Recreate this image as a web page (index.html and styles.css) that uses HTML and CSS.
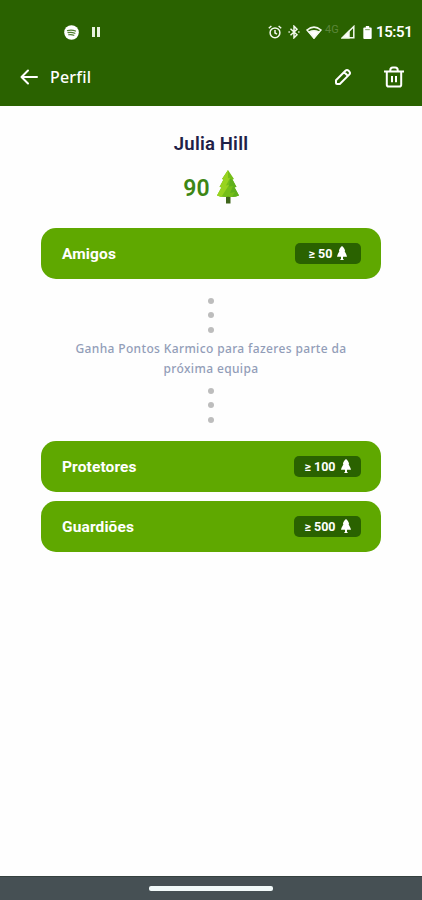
FILE: index.html
```
<!DOCTYPE html>
<html lang="pt">
<head>
    <meta charset="UTF-8">
    <meta name="viewport" content="width=device-width, initial-scale=1.0">
    <title>Perfil</title>
    <link rel="stylesheet" href="styles.css">
</head>
<body>
    <svg class="symbols" aria-hidden="true">
        <symbol id="tree" viewBox="0 0 10 14">
            <path d="M5 0C3.400 1 2.200 3 1.900 5.200h.6C1.500 6.700.6 8.200 0 10.800H4V13H3.400v1h3.200v-1H6v-2.200h4C9.400 8.200 8.500 6.700 7.500 5.200h.6C7.800 3 6.600 1 5 0z"/>
        </symbol>
    </svg>

    <header>
        <div class="status-bar">
            <div class="status-left">
                <svg class="spotify" viewBox="0 0 16 16">
                    <circle cx="8" cy="8" r="7.800" fill="#fff"/>
                    <path d="M3.700 6Q8 4.700 12.300 6.400M4.300 8.200Q8 7.200 11.600 8.800M5 10.400Q8 9.700 10.500 11" fill="none" stroke="#4f7c30" stroke-width="1.300" stroke-linecap="round"/>
                </svg>
                <svg class="pause" viewBox="0 0 8 10">
                    <path d="M0 0h3v10H0zM5 0h3v10H5z" fill="#e8f3df"/>
                </svg>
            </div>
            <div class="status-right">
                <svg class="alarm" viewBox="0 0 14 14">
                    <circle cx="7" cy="7.800" r="4.900"/>
                    <path d="M7 5v3l2 1.200M.8 3.200l2.600-2.200M13.200 3.200l-2.600-2.200"/>
                </svg>
                <svg class="bluetooth" viewBox="0 0 12 14">
                    <path d="M2.500 3.800l6.500 6L6 12.800V1.200l3 3-6.500 6"/>
                    <path d="M.5 7h1.300M10.200 7h1.300"/>
                </svg>
                <svg class="wifi" viewBox="0 0 16 13">
                    <path d="M1 4Q8-1.800 15 4L8 12z"/>
                    <path d="M3.200 6Q8 3.300 12.800 6L8 12z" fill="#fff"/>
                </svg>
                <span class="network">4G</span>
                <svg class="signal" viewBox="0 0 14 14">
                    <path d="M1.500 12.800H12.800V1.500z"/>
                    <path d="M1.500 12.800L8 6.300v6.500z" fill="#fff"/>
                </svg>
                <svg class="battery" viewBox="0 0 9 14">
                    <path d="M2.700 0h3.600v1.500H8q1 0 1 1V13q0 1-1 1H1q-1 0-1-1V2.500q0-1 1-1h1.700z" fill="#fff"/>
                    <path d="M2 3.300h5v1.200H2z" fill="#88a96c"/>
                </svg>
                <span class="clock">15:51</span>
            </div>
        </div>
        <div class="toolbar">
            <svg class="back" viewBox="0 0 18 16">
                <path d="M17 8H1.800M8 1.500L1.500 8 8 14.500"/>
            </svg>
            <h1>Perfil</h1>
            <svg class="edit" viewBox="0 0 18 18">
                <path d="M2 12.200L11.400 2.800q1.600-1.600 3.200 0l.6.6q1.600 1.600 0 3.200L5.800 16H3q-1 0-1-1zM10.200 4.200l3.600 3.600"/>
            </svg>
            <svg class="delete" viewBox="0 0 20 22">
                <path d="M0 5.500h20M6.300 5V4q0-2.500 2.500-2.500h2.400q2.500 0 2.500 2.500v1M2.800 5.500v13.200q0 1.800 1.800 1.800h10.800q1.800 0 1.800-1.800V5.500M8 10v6.200M12 10v6.200"/>
            </svg>
        </div>
    </header>

    <main>
        <h2>Julia Hill</h2>
        <div class="points">
            <span>90</span>
            <svg viewBox="0 0 22 34">
                <path d="M9 25h4.500v8.500H9z" fill="#3f651b"/>
                <path d="M11 0L5 9l1.500.4L2.500 17l2 .3L0 25.500q5 2.300 11 1.200 6 1.100 11-1.200L17.500 17.300l2-.3-4-7.600L17 9z" fill="#75be18"/>
                <path d="M11 0L5 9l1.500.4L2.500 17l2 .3L0 25.500q2 1 4.500 1.300L12 15l-3 .5L13 8l-2 .3z" fill="#98d31f"/>
                <path d="M13 9l2.500.4 4 7.600-2 .3L22 25.500q-3 1.500-7 1.400L18 22l-5 1 3-7-4 .5z" fill="#5fb01c"/>
            </svg>
        </div>

        <section class="team">
            <h3>Amigos</h3>
            <div class="badge small">≥ 50 <svg><use href="#tree"/></svg></div>
        </section>

        <div class="progress">
            <div class="dots"><i></i><i></i><i></i></div>
            <p>Ganha Pontos Karmico para fazeres parte da<br>próxima equipa</p>
            <div class="dots"><i></i><i></i><i></i></div>
        </div>

        <section class="team">
            <h3>Protetores</h3>
            <div class="badge">≥ 100 <svg><use href="#tree"/></svg></div>
        </section>
        <section class="team">
            <h3>Guardiões</h3>
            <div class="badge">≥ 500 <svg><use href="#tree"/></svg></div>
        </section>
    </main>

    <footer>
        <div class="home-bar"></div>
    </footer>
</body>
</html>
```
FILE: styles.css
```
* {
    box-sizing: border-box;
}
body {
    margin: 0;
    height: 900px;
    display: flex;
    flex-direction: column;
    font-family: Roboto, sans-serif;
    background-color: #fefefe;
}
h1, h2, h3, p {
    margin: 0;
}
svg {
    display: block;
    flex: none;
}
.symbols {
    display: none;
}
header {
    height: 105.5px;
    background-color: #2a6200;
    color: white;
}
.status-bar {
    height: 49px;
    padding: 15px 10px 0 64px;
    display: flex;
    justify-content: space-between;
}
.status-left, .status-right {
    height: 34px;
    display: flex;
    align-items: center;
}
.spotify {
    width: 15px;
    height: 15px;
}
.pause {
    width: 8px;
    height: 10px;
    margin-left: 13px;
}
.status-right svg {
    fill: none;
    stroke: #f3f9ee;
    stroke-width: 1.5;
}
.status-right .battery {
    width: 9px;
    height: 13px;
    margin-left: 8px;
    stroke: none;
}
.alarm {
    width: 14px;
    height: 14px;
}
.bluetooth {
    width: 12px;
    height: 14px;
    margin-left: 6px;
}
.wifi {
    width: 16px;
    height: 13px;
    margin-left: 6px;
}
.network {
    width: 15px;
    margin: -5px 0 0 3px;
    font-size: 11px;
    color: #5c863a;
}
.signal {
    width: 14px;
    height: 14px;
    margin-left: 1px;
}
.clock {
    width: 36px;
    margin-left: 4px;
    font-size: 15px;
    font-weight: 600;
    letter-spacing: -0.4px;
    white-space: nowrap;
}
.toolbar {
    height: 56px;
    padding: 0 18px 0 20px;
    display: flex;
    align-items: center;
}
.toolbar svg {
    fill: none;
    stroke: white;
    stroke-width: 2;
    stroke-linejoin: round;
}
.back {
    width: 18px;
    height: 16px;
    stroke-linecap: round;
}
h1 {
    flex: 1;
    margin-left: 12px;
    font-family: "Noto Sans", sans-serif;
    font-size: 16px;
    font-weight: 500;
    letter-spacing: 0.2px;
}
.edit {
    width: 18px;
    height: 18px;
    margin-right: 32px;
}
.delete {
    width: 20px;
    height: 22px;
}
main {
    flex: 1;
    padding: 25px 41px 0;
}
h2 {
    height: 26px;
    line-height: 26px;
    text-align: center;
    font-size: 18.5px;
    font-weight: 600;
    letter-spacing: 0.2px;
    color: #202047;
}
.points {
    height: 34px;
    margin: 13px 0 24px;
    display: flex;
    justify-content: center;
    align-items: center;
    gap: 7px;
    font-size: 23px;
    font-weight: 600;
    color: #3d8614;
}
.points span {
    padding-top: 3px;
}
.points svg {
    width: 22px;
    height: 34px;
}
.team {
    height: 51px;
    margin-bottom: 9px;
    padding: 0 20px 0 21px;
    display: flex;
    align-items: center;
    justify-content: space-between;
    border-radius: 15px;
    background-color: #5fa800;
    color: white;
}
h3 {
    padding-top: 1px;
    font-size: 15.5px;
    font-weight: 700;
    letter-spacing: 0.12px;
}
.badge {
    width: 67px;
    height: 21px;
    display: flex;
    align-items: center;
    justify-content: center;
    gap: 5px;
    border-radius: 5px;
    background-color: #2a6200;
    font-size: 12.5px;
    font-weight: 700;
}
.badge.small {
    width: 66px;
}
.badge svg {
    width: 10px;
    height: 14px;
    fill: white;
}
.progress {
    height: 153px;
    padding-top: 10px;
}
.dots {
    display: flex;
    flex-direction: column;
    align-items: center;
    gap: 8.5px;
}
.dots i {
    width: 6px;
    height: 6px;
    border-radius: 50%;
    background-color: #bdbdbd;
}
.progress p {
    margin: 6px 0 8px;
    font-family: "Noto Sans", sans-serif;
    font-size: 12px;
    font-weight: 500;
    letter-spacing: 0.36px;
    line-height: 20.5px;
    text-align: center;
    color: #929db8;
}
footer {
    height: 24px;
    display: flex;
    justify-content: center;
    border-top: 1px solid #35413f;
    background-color: #465054;
}
.home-bar {
    width: 124px;
    height: 5px;
    margin-top: 9px;
    border-radius: 2px;
    background-color: #f2fafa;
}
```
